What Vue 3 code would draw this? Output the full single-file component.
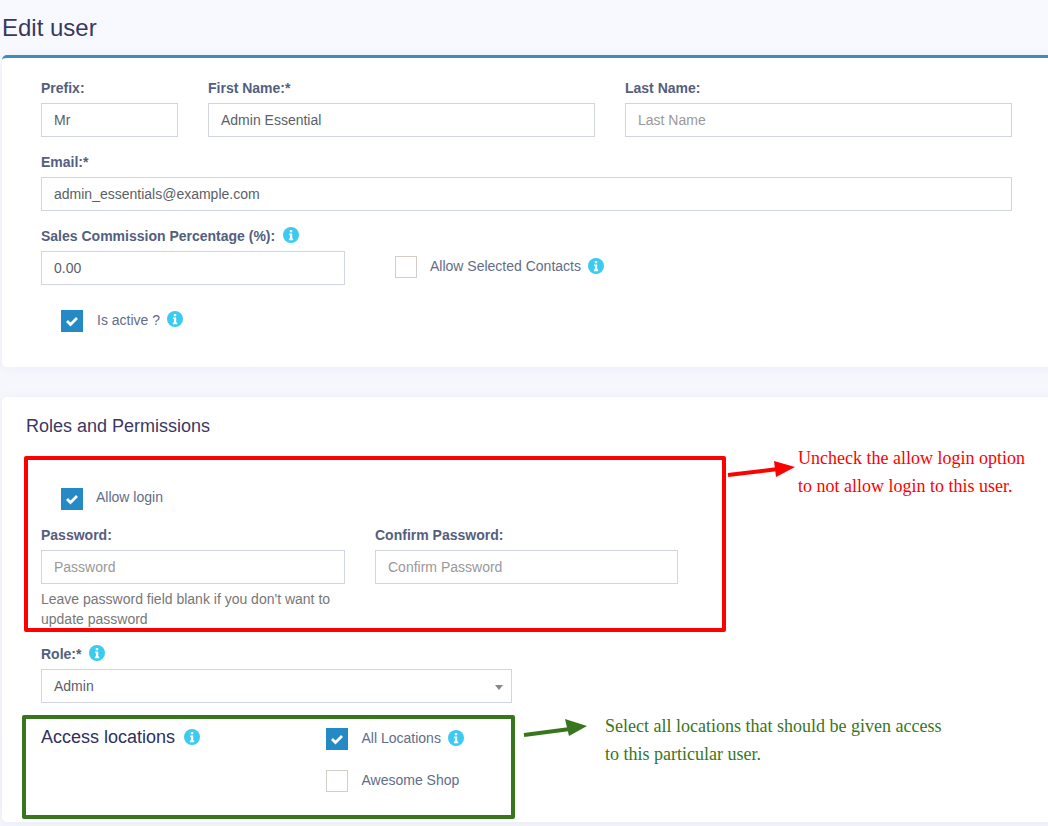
<script setup>
const topCols = [
  { label: 'Prefix:', value: 'Mr', placeholder: '' },
  { label: 'First Name:*', value: 'Admin Essential', placeholder: '' },
  { label: 'Last Name:', value: '', placeholder: 'Last Name' }
]
const infoPath = 'M6.8 3h2.4v2.2H6.8zM6.2 6.4h3v5.2h1v1.6H5.9v-1.6h1V8h-.7z'
const checkPath = 'M6 11l3.5 3.5 6.5-6.5'
</script>

<template>
  <div class="page">
    <h1 class="title">Edit user</h1>

    <section class="card card-top">
      <div class="grid-top">
        <div v-for="c in topCols" :key="c.label" class="group">
          <label class="lbl">{{ c.label }}</label>
          <input class="inp" :value="c.value" :placeholder="c.placeholder" />
        </div>
      </div>
      <div class="group">
        <label class="lbl">Email:*</label>
        <input class="inp" value="admin_essentials@example.com" />
      </div>
      <div class="sales-row">
        <div class="group sales">
          <label class="lbl">Sales Commission Percentage (%):
            <svg class="info" viewBox="0 0 16 16"><circle cx="8" cy="8" r="8" fill="#3bcbf0" /><path :d="infoPath" fill="#fff" /></svg>
          </label>
          <input class="inp" value="0.00" />
        </div>
        <div class="check-line contacts">
          <span class="box"></span>
          <span class="check-text">Allow Selected Contacts</span>
          <svg class="info" viewBox="0 0 16 16"><circle cx="8" cy="8" r="8" fill="#3bcbf0" /><path :d="infoPath" fill="#fff" /></svg>
        </div>
      </div>
      <div class="check-line active">
        <span class="box on"><svg viewBox="0 0 22 22"><path :d="checkPath" fill="none" stroke="#fff" stroke-width="2.8" /></svg></span>
        <span class="check-text">Is active ?</span>
        <svg class="info" viewBox="0 0 16 16"><circle cx="8" cy="8" r="8" fill="#3bcbf0" /><path :d="infoPath" fill="#fff" /></svg>
      </div>
    </section>

    <section class="card card-roles">
      <h2 class="sub">Roles and Permissions</h2>

      <div class="red-box">
        <div class="check-line login">
          <span class="box on"><svg viewBox="0 0 22 22"><path :d="checkPath" fill="none" stroke="#fff" stroke-width="2.8" /></svg></span>
          <span class="check-text">Allow login</span>
        </div>
        <div class="pw-row">
          <div class="pw-col">
            <label class="lbl">Password:</label>
            <input class="inp" placeholder="Password" />
            <p class="help">Leave password field blank if you don't want to update password</p>
          </div>
          <div class="pw-col pw-confirm">
            <label class="lbl">Confirm Password:</label>
            <input class="inp" placeholder="Confirm Password" />
          </div>
        </div>
      </div>

      <div class="role">
        <label class="lbl">Role:*
          <svg class="info" viewBox="0 0 16 16"><circle cx="8" cy="8" r="8" fill="#3bcbf0" /><path :d="infoPath" fill="#fff" /></svg>
        </label>
        <div class="inp select">Admin<span class="caret"></span></div>
      </div>

      <div class="green-box">
        <div class="access-head">
          <span>Access locations</span>
          <svg class="info" viewBox="0 0 16 16"><circle cx="8" cy="8" r="8" fill="#3bcbf0" /><path :d="infoPath" fill="#fff" /></svg>
        </div>
        <div class="locs">
          <div class="check-line">
            <span class="box on"><svg viewBox="0 0 22 22"><path :d="checkPath" fill="none" stroke="#fff" stroke-width="2.8" /></svg></span>
            <span class="check-text">All Locations</span>
            <svg class="info" viewBox="0 0 16 16"><circle cx="8" cy="8" r="8" fill="#3bcbf0" /><path :d="infoPath" fill="#fff" /></svg>
          </div>
          <div class="check-line">
            <span class="box"></span>
            <span class="check-text">Awesome Shop</span>
          </div>
        </div>
      </div>
    </section>

    <svg class="arrows" viewBox="0 0 1048 826" width="1048" height="826">
      <path d="M728 475L778 469" stroke="#ff0000" stroke-width="4" fill="none" />
      <path d="M774 461L795 467L776 477z" fill="#ff0000" />
      <path d="M524 735L570 729" stroke="#38761d" stroke-width="4" fill="none" />
      <path d="M565 719L587 726L569 736z" fill="#38761d" />
    </svg>
    <p class="note note-red">Uncheck the allow login option<br />to not allow login to this user.</p>
    <p class="note note-green">Select all locations that should be given access<br />to this particular user.</p>
  </div>
</template>

<style>
html, body { margin: 0; background: #f4f6fc; overflow: hidden; }
</style>

<style scoped>
.page {
  position: relative;
  width: 1048px;
  height: 826px;
  overflow: hidden;
  padding-left: 2px;
  box-sizing: border-box;
  background: linear-gradient(#f8f9fe, #f4f6fc);
  font-family: "Liberation Sans", Arial, sans-serif;
  font-size: 14px;
  color: #555;
}
.title {
  margin: 0;
  padding-top: 14px;
  height: 42px;
  box-sizing: border-box;
  font-size: 24px;
  line-height: 28px;
  font-weight: 400;
  color: #3a3862;
}
.card {
  width: 1060px;
  background: #fff;
  border-radius: 5px;
  box-sizing: border-box;
  box-shadow: 0 1px 12px rgba(69, 65, 120, 0.06);
}
.card-top {
  height: 312px;
  margin-top: 13px;
  padding: 20px 0 0 39px;
  border-top: 3px solid #3c8dbc;
}
.card-top > * { width: 971px; }
.grid-top {
  display: grid;
  grid-template-columns: 137px 387px 387px;
  column-gap: 30px;
}
.group { margin-bottom: 15px; }
.lbl {
  display: flex;
  align-items: center;
  gap: 4px;
  height: 20px;
  margin-bottom: 5px;
  font-weight: 700;
  font-size: 14px;
  line-height: 20px;
  color: #545e7e;
  white-space: pre;
}
.inp {
  display: block;
  width: 100%;
  height: 34px;
  box-sizing: border-box;
  padding: 6px 12px;
  border: 1px solid #d1d5e0;
  border-radius: 0;
  outline: none;
  font: 14px/20px "Liberation Sans", Arial, sans-serif;
  color: #5a5f68;
  background: #fff;
}
.inp::placeholder { color: #999; opacity: 1; }
.sales-row { display: flex; }
.sales { width: 304px; flex: none; }
.check-line {
  display: flex;
  align-items: center;
  height: 22px;
}
.box {
  flex: none;
  width: 22px;
  height: 22px;
  box-sizing: border-box;
  border: 1px solid #d3cfc8;
  background: #fff;
}
.box.on { border: 0; background: #2489c5; }
.box svg { display: block; width: 22px; height: 22px; }
.check-text {
  margin-left: 13px;
  margin-right: 7px;
  margin-bottom: 2px;
  line-height: 20px;
  color: #626d8a;
}
.info { flex: none; width: 16px; height: 16px; display: block; margin-top: -3px; }
.contacts { margin: 30px 0 0 50px; width: auto; height: 22px; align-self: flex-start; }
.active { margin: 10px 0 0 20px; }
.active .check-text { margin-left: 14px; }
.active .info { margin-top: -4px; }
.card-roles {
  height: 425px;
  margin-top: 30px;
  padding: 0;
}
.sub {
  margin: 0;
  padding: 19px 0 0 24px;
  height: 59px;
  box-sizing: border-box;
  font-size: 18px;
  font-weight: 400;
  line-height: 20px;
  color: #3a3862;
}
.red-box {
  width: 702px;
  height: 176px;
  margin-left: 22px;
  box-sizing: border-box;
  border: 4px solid #ff0000;
  border-radius: 2px;
  padding: 28px 0 0 13px;
}
.login { margin-left: 20px; margin-bottom: 15px; }
.login .check-text { margin-bottom: 4px; }
.pw-row { display: flex; gap: 30px; }
.pw-col { width: 304px; flex: none; }
.pw-confirm { width: 303px; }
.help {
  margin: 5px 0 0;
  font-size: 14px;
  line-height: 20px;
  color: #777;
}
.role { width: 471px; margin: 12px 0 0 39px; }
.select { position: relative; line-height: 20px; }
.caret {
  position: absolute;
  right: 8px;
  top: 15px;
  width: 0;
  height: 0;
  border-left: 4px solid transparent;
  border-right: 4px solid transparent;
  border-top: 5px solid #888;
}
.green-box {
  display: flex;
  width: 493px;
  height: 104px;
  margin: 12px 0 0 20px;
  box-sizing: border-box;
  border: 4px solid #38761d;
  border-radius: 2px;
  padding: 8px 0 0 15px;
}
.access-head {
  display: flex;
  align-items: center;
  gap: 9px;
  width: 285px;
  height: 20px;
  font-size: 18px;
  line-height: 20px;
  color: #2e2f63;
  flex: none;
}
.access-head .info { margin-top: 0; }
.locs { display: flex; flex-direction: column; gap: 20px; margin-top: 1px; }
.locs .check-text { margin-left: 13.5px; margin-right: 7.5px; }
.note {
  position: absolute;
  margin: 0;
  font-family: "Liberation Serif", "Times New Roman", serif;
  font-size: 18px;
  line-height: 28px;
  white-space: nowrap;
}
.note-red { left: 798px; top: 444px; color: #ff0000; }
.note-green { left: 605px; top: 712px; color: #38761d; }
.arrows { position: absolute; left: 0; top: 0; pointer-events: none; }
</style>
